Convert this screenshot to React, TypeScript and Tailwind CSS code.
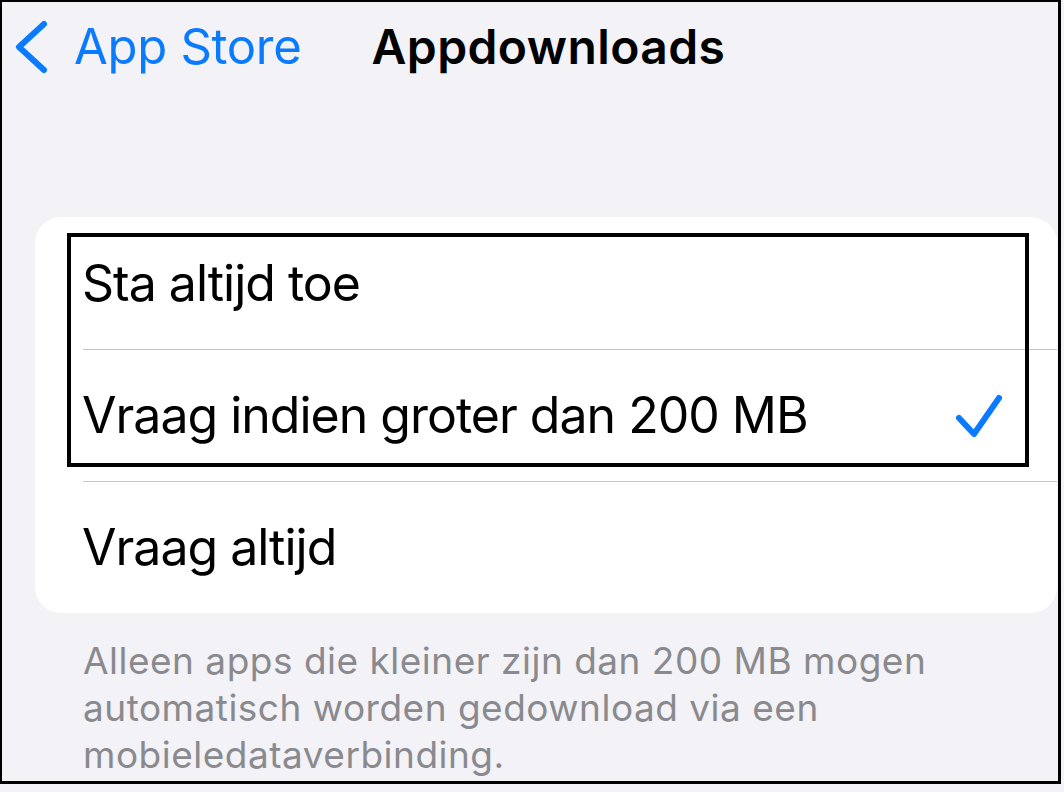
export default function App() {
  const rows = [
    { label: 'Sta altijd toe', checked: false },
    { label: 'Vraag indien groter dan 200 MB', checked: true },
    { label: 'Vraag altijd', checked: false },
  ];

  return (
    <div className="w-[1064px] h-[792px] bg-[#f2f2f7] font-['Inter','Liberation_Sans',sans-serif]">
      <div className="w-[1061px] h-[784px] border-t-2 border-l-2 border-r-[3px] border-b-[3px] border-black overflow-hidden flex flex-col">
        {/* Nav bar */}
        <div className="h-[90px] flex items-center pl-[12px]">
          <svg width="36" height="56" viewBox="0 0 36 56" className="text-[#0a7aff]">
            <path d="M30 5 L5 28 L30 51" fill="none" stroke="currentColor" strokeWidth="6" strokeLinecap="round" strokeLinejoin="round" />
          </svg>
          <span className="ml-[24px] text-[49px] text-[#0a7aff] tracking-[-0.3px]">App Store</span>
          <span className="ml-[70px] text-[48px] font-semibold text-black tracking-[0.4px]">Appdownloads</span>
        </div>

        {/* Options card */}
        <div className="mt-[125px] ml-[33px] w-[1022px] bg-white rounded-[26px] relative">
          {rows.map((row, i) => (
            <div key={row.label} className="h-[132px] flex flex-col">
              {i > 0 && <div className="ml-[48px] h-px bg-[#c8c8cc]" />}
              <div className="flex-1 flex items-center pl-[47px] pr-[54px]">
                <span className="flex-1 text-[50px] text-black tracking-[-1px]">{row.label}</span>
                {row.checked && (
                  <svg width="48" height="46" viewBox="0 0 48 46" className="text-[#0a7aff]">
                    <path d="M4 25 L19 41 L44 5" fill="none" stroke="currentColor" strokeWidth="6" strokeLinecap="round" strokeLinejoin="round" />
                  </svg>
                )}
              </div>
            </div>
          ))}
          <div className="absolute left-[32px] top-[16px] w-[962px] h-[234px] border-[4.5px] border-black" />
        </div>

        {/* Footer */}
        <p className="mt-[24px] pl-[81px] pr-[40px] text-[37px] leading-[47px] tracking-[0.5px] text-[#8a8a8e]">
          Alleen apps die kleiner zijn dan 200 MB mogen automatisch worden gedownload via een mobieledataverbinding.
        </p>
      </div>
    </div>
  );
}
